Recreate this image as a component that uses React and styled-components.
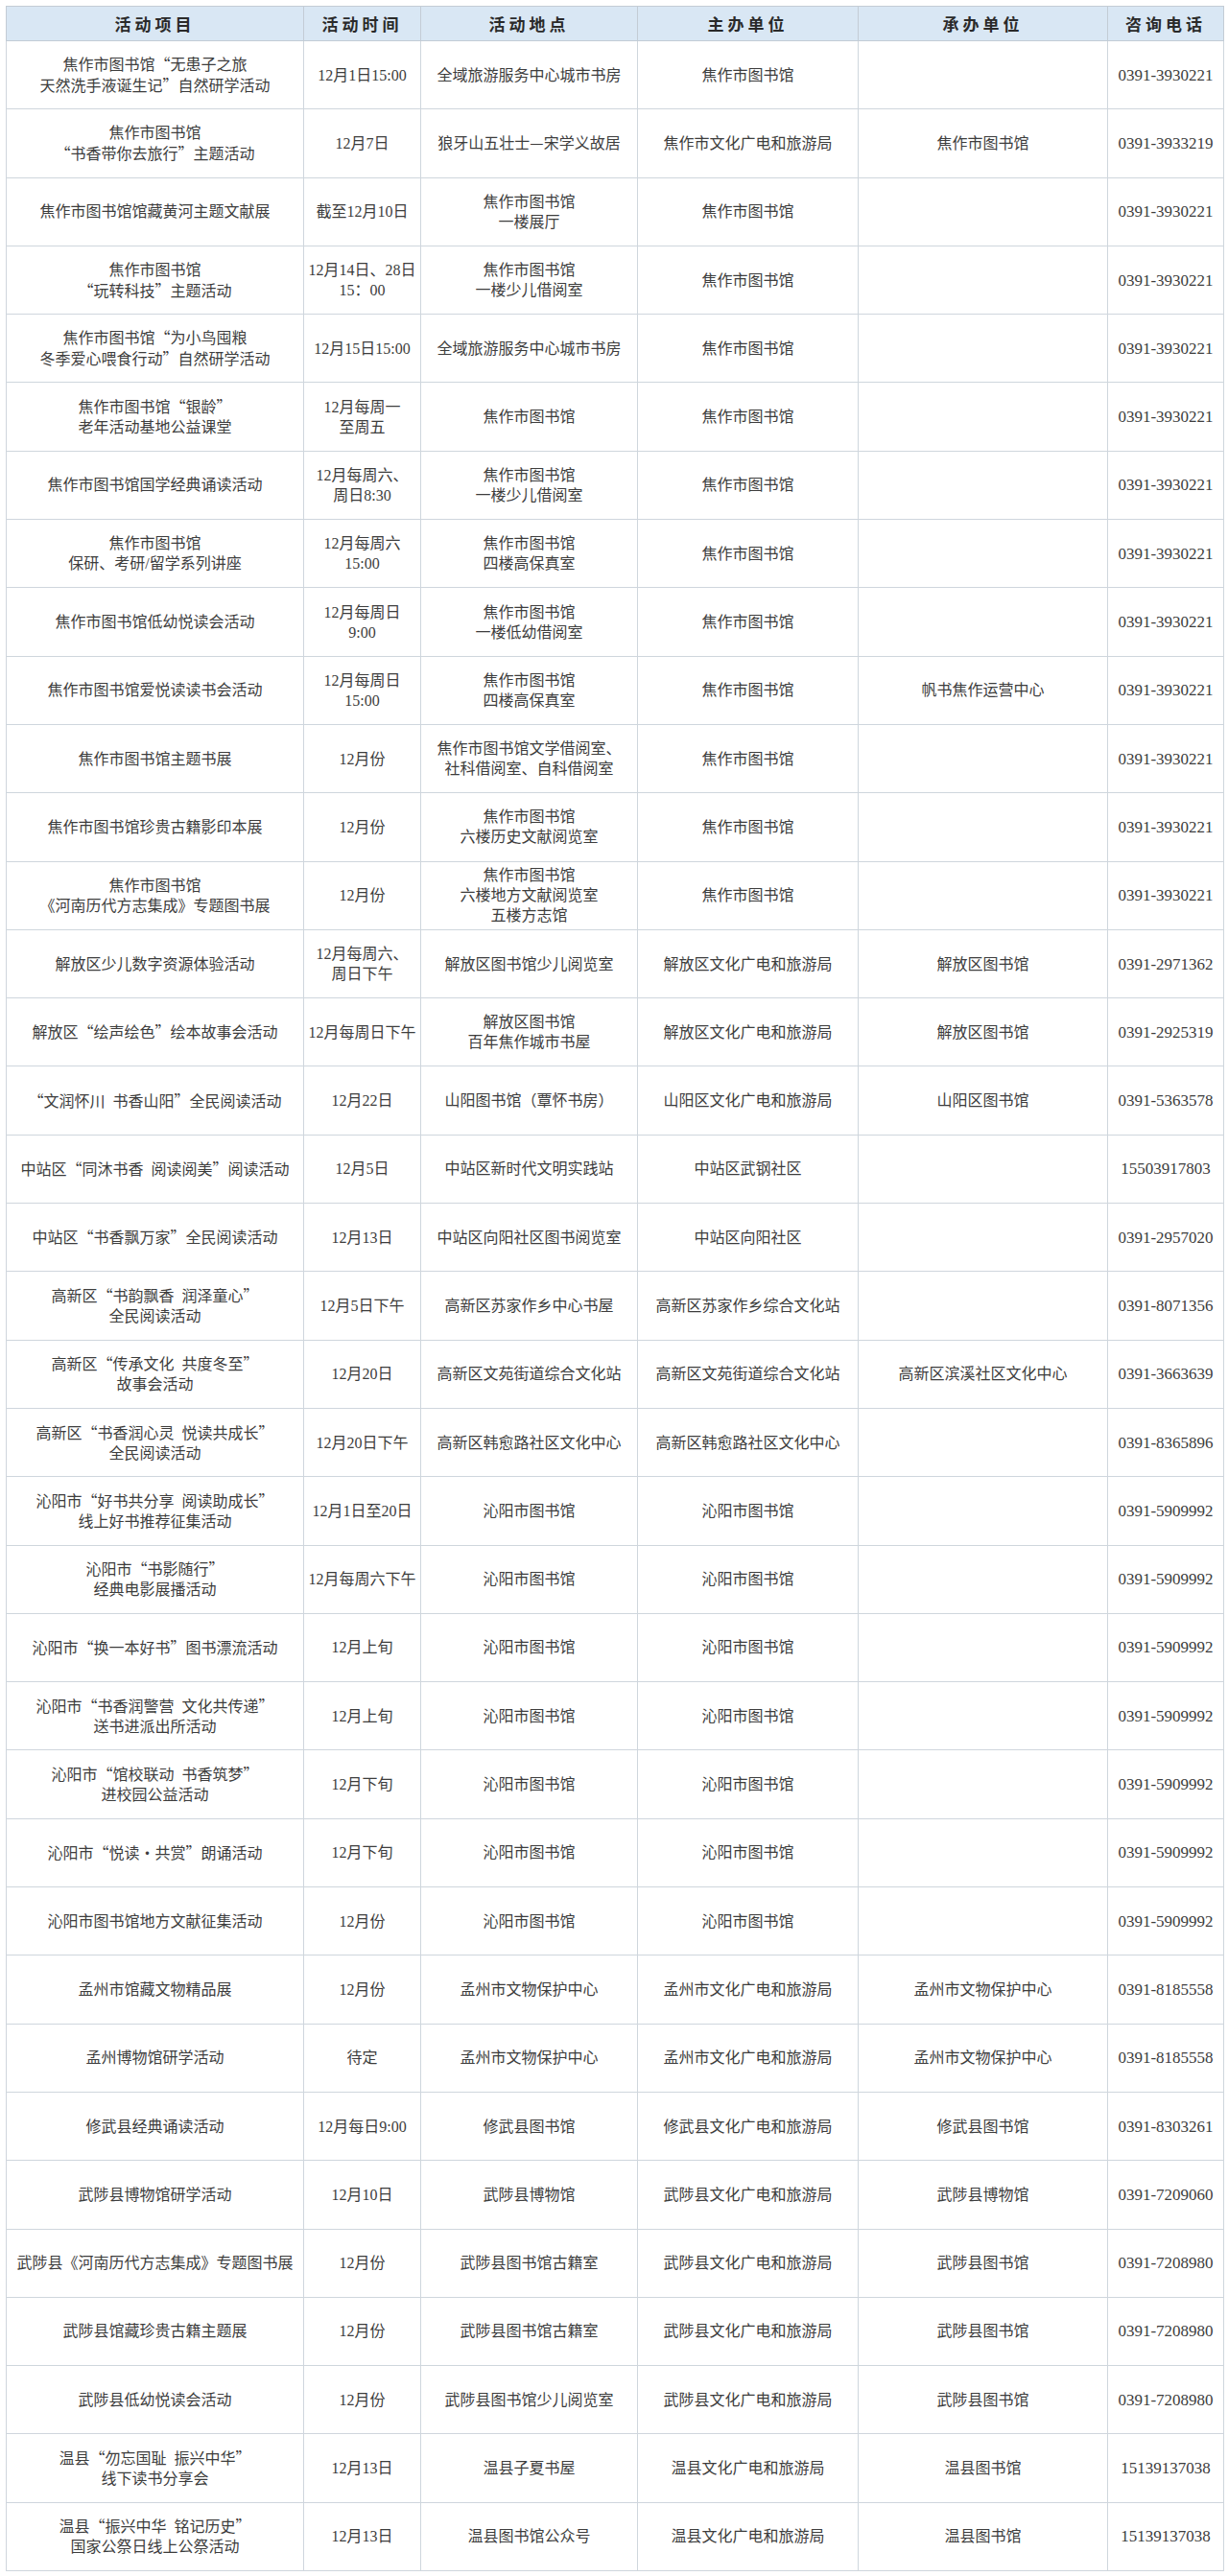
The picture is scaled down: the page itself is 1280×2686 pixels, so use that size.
import React from "react";
import styled, { createGlobalStyle } from "styled-components";

const GlobalStyle = createGlobalStyle`
  html, body {
    margin: 0;
    padding: 0;
    background: #ffffff;
  }
  body {
    font-family: "Liberation Serif", "Noto Sans CJK SC", serif;
    color: #3b3b3b;
  }
`;

const Page = styled.div`
  padding: 6px 5px 6px 6px;
  width: 1280px;
  box-sizing: border-box;
`;

const Table = styled.table`
  width: 1269px;
  table-layout: fixed;
  border-collapse: collapse;
  border: 1px solid #bcc6d0;
`;

const HeadCell = styled.th`
  height: 35px;
  padding: 0;
  background: #d9e7f4;
  border: 1px solid #c3ccd5;
  font-family: "Noto Sans CJK SC", sans-serif;
  font-size: 17px;
  font-weight: 700;
  letter-spacing: 4px;
  color: #2a2a2a;
  text-align: center;
  vertical-align: middle;
`;

const Row = styled.tr`
  height: 71.3px;
`;

const Cell = styled.td`
  padding: 0 2px;
  border: 1px solid #cfd6dd;
  font-size: ${(p) => (p.$phone ? "17px" : "16px")};
  line-height: 21px;
  color: #3d3d3d;
  text-align: center;
  vertical-align: middle;
  white-space: pre;
`;

/* full-width CJK punctuation */
const Punct = styled.span`
  font-family: "Noto Sans CJK SC", sans-serif;
`;

const cols = [310, 122, 226, 230, 260, 121];
const heads = ["活动项目", "活动时间", "活动地点", "主办单位", "承办单位", "咨询电话"];

const JZ = "焦作市图书馆";
const QY = "沁阳市图书馆";
const QYP = "0391-5909992";
const JZP = "0391-3930221";

const rows = [
  ["焦作市图书馆“无患子之旅\n天然洗手液诞生记”自然研学活动", "12月1日15:00", "全域旅游服务中心城市书房", JZ, "", JZP],
  ["焦作市图书馆\n“书香带你去旅行”主题活动", "12月7日", "狼牙山五壮士—宋学义故居", "焦作市文化广电和旅游局", JZ, "0391-3933219"],
  ["焦作市图书馆馆藏黄河主题文献展", "截至12月10日", "焦作市图书馆\n一楼展厅", JZ, "", JZP],
  ["焦作市图书馆\n“玩转科技”主题活动", "12月14日、28日\n15：00", "焦作市图书馆\n一楼少儿借阅室", JZ, "", JZP],
  ["焦作市图书馆“为小鸟囤粮\n冬季爱心喂食行动”自然研学活动", "12月15日15:00", "全域旅游服务中心城市书房", JZ, "", JZP],
  ["焦作市图书馆“银龄”\n老年活动基地公益课堂", "12月每周一\n至周五", JZ, JZ, "", JZP],
  ["焦作市图书馆国学经典诵读活动", "12月每周六、\n周日8:30", "焦作市图书馆\n一楼少儿借阅室", JZ, "", JZP],
  ["焦作市图书馆\n保研、考研/留学系列讲座", "12月每周六\n15:00", "焦作市图书馆\n四楼高保真室", JZ, "", JZP],
  ["焦作市图书馆低幼悦读会活动", "12月每周日\n9:00", "焦作市图书馆\n一楼低幼借阅室", JZ, "", JZP],
  ["焦作市图书馆爱悦读读书会活动", "12月每周日\n15:00", "焦作市图书馆\n四楼高保真室", JZ, "帆书焦作运营中心", JZP],
  ["焦作市图书馆主题书展", "12月份", "焦作市图书馆文学借阅室、\n社科借阅室、自科借阅室", JZ, "", JZP],
  ["焦作市图书馆珍贵古籍影印本展", "12月份", "焦作市图书馆\n六楼历史文献阅览室", JZ, "", JZP],
  ["焦作市图书馆\n《河南历代方志集成》专题图书展", "12月份", "焦作市图书馆\n六楼地方文献阅览室\n五楼方志馆", JZ, "", JZP],
  ["解放区少儿数字资源体验活动", "12月每周六、\n周日下午", "解放区图书馆少儿阅览室", "解放区文化广电和旅游局", "解放区图书馆", "0391-2971362"],
  ["解放区“绘声绘色”绘本故事会活动", "12月每周日下午", "解放区图书馆\n百年焦作城市书屋", "解放区文化广电和旅游局", "解放区图书馆", "0391-2925319"],
  ["“文润怀川  书香山阳”全民阅读活动", "12月22日", "山阳图书馆（覃怀书房）", "山阳区文化广电和旅游局", "山阳区图书馆", "0391-5363578"],
  ["中站区“同沐书香  阅读阅美”阅读活动", "12月5日", "中站区新时代文明实践站", "中站区武钢社区", "", "15503917803"],
  ["中站区“书香飘万家”全民阅读活动", "12月13日", "中站区向阳社区图书阅览室", "中站区向阳社区", "", "0391-2957020"],
  ["高新区“书韵飘香  润泽童心”\n全民阅读活动", "12月5日下午", "高新区苏家作乡中心书屋", "高新区苏家作乡综合文化站", "", "0391-8071356"],
  ["高新区“传承文化  共度冬至”\n故事会活动", "12月20日", "高新区文苑街道综合文化站", "高新区文苑街道综合文化站", "高新区滨溪社区文化中心", "0391-3663639"],
  ["高新区“书香润心灵  悦读共成长”\n全民阅读活动", "12月20日下午", "高新区韩愈路社区文化中心", "高新区韩愈路社区文化中心", "", "0391-8365896"],
  ["沁阳市“好书共分享  阅读助成长”\n线上好书推荐征集活动", "12月1日至20日", QY, QY, "", QYP],
  ["沁阳市“书影随行”\n经典电影展播活动", "12月每周六下午", QY, QY, "", QYP],
  ["沁阳市“换一本好书”图书漂流活动", "12月上旬", QY, QY, "", QYP],
  ["沁阳市“书香润警营  文化共传递”\n送书进派出所活动", "12月上旬", QY, QY, "", QYP],
  ["沁阳市“馆校联动  书香筑梦”\n进校园公益活动", "12月下旬", QY, QY, "", QYP],
  ["沁阳市“悦读·共赏”朗诵活动", "12月下旬", QY, QY, "", QYP],
  ["沁阳市图书馆地方文献征集活动", "12月份", QY, QY, "", QYP],
  ["孟州市馆藏文物精品展", "12月份", "孟州市文物保护中心", "孟州市文化广电和旅游局", "孟州市文物保护中心", "0391-8185558"],
  ["孟州博物馆研学活动", "待定", "孟州市文物保护中心", "孟州市文化广电和旅游局", "孟州市文物保护中心", "0391-8185558"],
  ["修武县经典诵读活动", "12月每日9:00", "修武县图书馆", "修武县文化广电和旅游局", "修武县图书馆", "0391-8303261"],
  ["武陟县博物馆研学活动", "12月10日", "武陟县博物馆", "武陟县文化广电和旅游局", "武陟县博物馆", "0391-7209060"],
  ["武陟县《河南历代方志集成》专题图书展", "12月份", "武陟县图书馆古籍室", "武陟县文化广电和旅游局", "武陟县图书馆", "0391-7208980"],
  ["武陟县馆藏珍贵古籍主题展", "12月份", "武陟县图书馆古籍室", "武陟县文化广电和旅游局", "武陟县图书馆", "0391-7208980"],
  ["武陟县低幼悦读会活动", "12月份", "武陟县图书馆少儿阅览室", "武陟县文化广电和旅游局", "武陟县图书馆", "0391-7208980"],
  ["温县“勿忘国耻  振兴中华”\n线下读书分享会", "12月13日", "温县子夏书屋", "温县文化广电和旅游局", "温县图书馆", "15139137038"],
  ["温县“振兴中华  铭记历史”\n国家公祭日线上公祭活动", "12月13日", "温县图书馆公众号", "温县文化广电和旅游局", "温县图书馆", "15139137038"],
];

// split a line so the curly quotes and the middle dot get the CJK face
const withPunct = (line) =>
  line.split(/([“”·—])/).map((part, i) =>
    /^[“”·—]$/.test(part) ? <Punct key={i}>{part}</Punct> : part
  );

const Lines = ({ text }) =>
  text.split("\n").map((line, i) => (
    <React.Fragment key={i}>
      {i > 0 && "\n"}
      {withPunct(line)}
    </React.Fragment>
  ));

const App = () => (
  <>
    <GlobalStyle />
    <Page>
      <Table>
        <colgroup>
          {cols.map((w, i) => (
            <col key={i} style={{ width: w }} />
          ))}
        </colgroup>
        <thead>
          <tr>
            {heads.map((h) => (
              <HeadCell key={h}>{h}</HeadCell>
            ))}
          </tr>
        </thead>
        <tbody>
          {rows.map((r, i) => (
            <Row key={i}>
              {r.map((c, j) => (
                <Cell key={j} $phone={j === 5}>
                  <Lines text={c} />
                </Cell>
              ))}
            </Row>
          ))}
        </tbody>
      </Table>
    </Page>
  </>
);

export default App;
